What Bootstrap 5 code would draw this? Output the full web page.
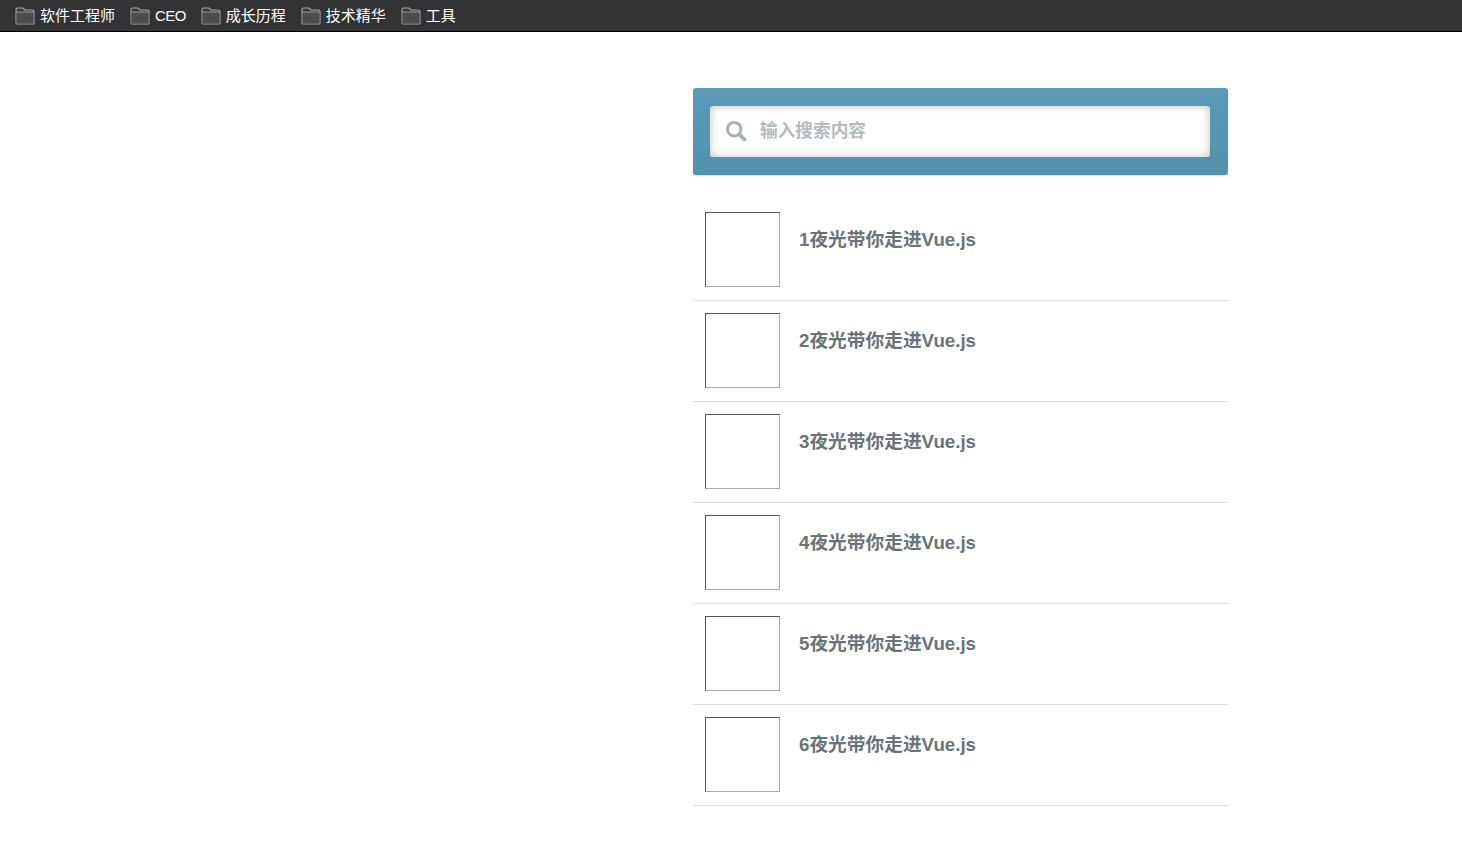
<!DOCTYPE html>
<html lang="zh">
<head>
<meta charset="utf-8">
<title>Vue</title>
<link href="https://cdn.jsdelivr.net/npm/bootstrap@5.3.0/dist/css/bootstrap.min.css" rel="stylesheet">
<style>
body{background:#fff;font-family:"Liberation Sans","Noto Sans CJK SC",sans-serif;}
.topbar{height:32px;background:#333336;border-bottom:1px solid #000;padding-left:15px;gap:15px;}
.topitem{color:#fff;font-size:15px;line-height:31px;text-decoration:none;gap:5px;}
.topitem svg{width:20px;height:18px;flex:none;}
.latinlabel{letter-spacing:-.6px;}
.stage{width:535px;margin:56px 0 0 693px;}
.searchpanel{height:87px;padding:18px 18px 18px 17px;background:linear-gradient(#5b9ab7,#5291ae);border-radius:3px;box-shadow:0 1px 2px rgba(0,0,0,.15);}
.searchbox{height:51px;background:#fff;border-radius:2px;box-shadow:inset 0 0 9px rgba(0,0,0,.26);padding-left:15px;gap:13px;}
.searchbox svg{width:22px;height:22px;flex:none;margin-top:-1px;}
.searchinput{flex:1;min-width:0;border:0;outline:0;background:transparent;font-weight:700;font-size:17.67px;color:#333;padding:0;}
.searchinput::placeholder{color:#b4bbbe;opacity:1;}
.results{margin-top:25px;}
.resultrow{padding:12px 0 13px 12px;border-bottom:1px solid #ddd;gap:19px;}
.thumb{width:75px;height:75px;flex:none;border:1px solid;border-color:#555 #aaa #aaa #555;}
.resulttitle{font-size:18.72px;font-weight:700;color:#6a7378;margin:17px 0 0;line-height:1.2;}
</style>
</head>
<body>
<nav class="topbar d-flex align-items-center">
  <a class="topitem d-flex align-items-center" href="#"><svg viewBox="0 0 20 18"><path d="M1 16V2.500A1.500 1.500 0 0 1 2.500 1H8l2 2h7.500A1.500 1.500 0 0 1 19 4.500V16a1 1 0 0 1-1 1H2a1 1 0 0 1-1-1z" fill="#38383a" stroke="#a8a8a8" stroke-width="1.100"/><path d="M1.600 5.500h16.800V16.400H1.600z" fill="#4e4e50"/><path d="M1 5h18" stroke="#a8a8a8" stroke-width=".9"/></svg>软件工程师</a>
  <a class="topitem d-flex align-items-center" href="#"><svg viewBox="0 0 20 18"><path d="M1 16V2.500A1.500 1.500 0 0 1 2.500 1H8l2 2h7.500A1.500 1.500 0 0 1 19 4.500V16a1 1 0 0 1-1 1H2a1 1 0 0 1-1-1z" fill="#38383a" stroke="#a8a8a8" stroke-width="1.100"/><path d="M1.600 5.500h16.800V16.400H1.600z" fill="#4e4e50"/><path d="M1 5h18" stroke="#a8a8a8" stroke-width=".9"/></svg><span class="latinlabel">CEO</span></a>
  <a class="topitem d-flex align-items-center" href="#"><svg viewBox="0 0 20 18"><path d="M1 16V2.500A1.500 1.500 0 0 1 2.500 1H8l2 2h7.500A1.500 1.500 0 0 1 19 4.500V16a1 1 0 0 1-1 1H2a1 1 0 0 1-1-1z" fill="#38383a" stroke="#a8a8a8" stroke-width="1.100"/><path d="M1.600 5.500h16.800V16.400H1.600z" fill="#4e4e50"/><path d="M1 5h18" stroke="#a8a8a8" stroke-width=".9"/></svg>成长历程</a>
  <a class="topitem d-flex align-items-center" href="#"><svg viewBox="0 0 20 18"><path d="M1 16V2.500A1.500 1.500 0 0 1 2.500 1H8l2 2h7.500A1.500 1.500 0 0 1 19 4.500V16a1 1 0 0 1-1 1H2a1 1 0 0 1-1-1z" fill="#38383a" stroke="#a8a8a8" stroke-width="1.100"/><path d="M1.600 5.500h16.800V16.400H1.600z" fill="#4e4e50"/><path d="M1 5h18" stroke="#a8a8a8" stroke-width=".9"/></svg>技术精华</a>
  <a class="topitem d-flex align-items-center" href="#"><svg viewBox="0 0 20 18"><path d="M1 16V2.500A1.500 1.500 0 0 1 2.500 1H8l2 2h7.500A1.500 1.500 0 0 1 19 4.500V16a1 1 0 0 1-1 1H2a1 1 0 0 1-1-1z" fill="#38383a" stroke="#a8a8a8" stroke-width="1.100"/><path d="M1.600 5.500h16.800V16.400H1.600z" fill="#4e4e50"/><path d="M1 5h18" stroke="#a8a8a8" stroke-width=".9"/></svg>工具</a>
</nav>
<main class="stage">
  <div class="searchpanel">
    <div class="searchbox d-flex align-items-center">
      <svg viewBox="0 0 22 22"><circle cx="9.200" cy="9.200" r="6.800" fill="none" stroke="#a5b2b8" stroke-width="3"/><path d="M14.500 14.500L19.500 19.500" stroke="#a5b2b8" stroke-width="3.800" stroke-linecap="round"/></svg>
      <input class="searchinput" type="text" placeholder="输入搜索内容">
    </div>
  </div>
  <div class="results">
    <div class="resultrow d-flex"><div class="thumb"></div><h3 class="resulttitle">1夜光带你走进Vue.js</h3></div>
    <div class="resultrow d-flex"><div class="thumb"></div><h3 class="resulttitle">2夜光带你走进Vue.js</h3></div>
    <div class="resultrow d-flex"><div class="thumb"></div><h3 class="resulttitle">3夜光带你走进Vue.js</h3></div>
    <div class="resultrow d-flex"><div class="thumb"></div><h3 class="resulttitle">4夜光带你走进Vue.js</h3></div>
    <div class="resultrow d-flex"><div class="thumb"></div><h3 class="resulttitle">5夜光带你走进Vue.js</h3></div>
    <div class="resultrow d-flex"><div class="thumb"></div><h3 class="resulttitle">6夜光带你走进Vue.js</h3></div>
  </div>
</main>
<script src="https://cdn.jsdelivr.net/npm/bootstrap@5.3.0/dist/js/bootstrap.bundle.min.js"></script>
</body>
</html>
